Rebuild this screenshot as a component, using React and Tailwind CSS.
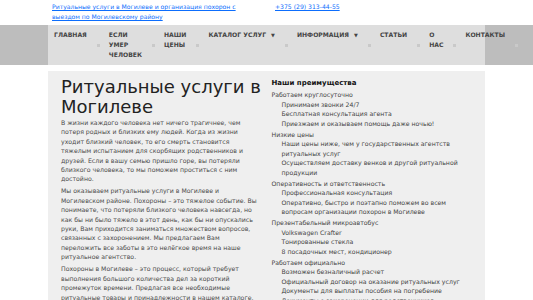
const navItems = [
  { label: "Главная", wrap: false },
  { label: "Если умер человек", wrap: true },
  { label: "Наши цены", wrap: true },
  { label: "Каталог услуг", wrap: false, caret: true },
  { label: "Информация", wrap: false, caret: true },
  { label: "Статьи", wrap: false },
  { label: "О нас", wrap: true },
  { label: "Контакты", wrap: false },
];

const advantages = [
  {
    title: "Работаем круглосуточно",
    items: [
      "Принимаем звонки 24/7",
      "Бесплатная консультация агента",
      "Приезжаем и оказываем помощь даже ночью!",
    ],
  },
  {
    title: "Низкие цены",
    items: [
      "Наши цены ниже, чем у государственных агентств ритуальных услуг",
      "Осуществляем доставку венков и другой ритуальной продукции",
    ],
  },
  {
    title: "Оперативность и ответственность",
    items: [
      "Профессиональная консультация",
      "Оперативно, быстро и поэтапно поможем во всем вопросам организации похорон в Могилеве",
    ],
  },
  {
    title: "Презентабельный микроавтобус",
    items: ["Volkswagen Crafter", "Тонированные стекла", "8 посадочных мест, кондиционер"],
  },
  {
    title: "Работаем официально",
    items: [
      "Возможен безналичный расчет",
      "Официальный договор на оказание ритуальных услуг",
      "Документы для выплаты пособия на погребение",
      "Документы о захоронении для родственников",
    ],
  },
];

const App = () => {
  return (
    <div className="min-h-screen bg-white font-['DejaVu_Sans',sans-serif] overflow-hidden">
      {/* Top links */}
      <div className="mx-auto w-[437px] h-[25px] flex pt-[2px] text-[6.1px] leading-[10px]">
        <div className="w-[218px] pl-[4px]">
          <a href="#" className="text-[#0d6efd] underline">
            Ритуальные услуги в Могилеве и организация похорон с<br />выездом по Могилевскому району
          </a>
        </div>
        <div className="pl-[9px]">
          <a href="#" className="text-[#0d6efd] underline">+375 (29) 313-44-55</a>
        </div>
      </div>

      {/* Nav */}
      <div className="bg-[#bdbdbd]">
        <ul className="mx-auto w-[437px] h-[40px] bg-[#dedede] flex pt-[5px]">
          {navItems.map((item) => (
            <li key={item.label} className="flex items-start pl-[6px] pr-[3px] shrink-0 h-[30px]">
              <span
                className={`text-[6.1px] leading-[10px] font-bold uppercase text-[#444] ${item.wrap ? "w-min" : "whitespace-nowrap"}`}
              >
                {item.label}
                {item.caret && <span className="ml-[5px] text-[5px]">▼</span>}
              </span>
              <span className="ml-[10px] self-center w-[3px] h-[3px] bg-[#c9c9c9]" />
            </li>
          ))}
        </ul>
      </div>

      {/* Content */}
      <div className="mx-auto mt-[6px] w-[437px] bg-[#efefef] px-[13px] pt-[6px] pb-[20px] grid grid-cols-2 gap-[10px]">
        <div>
          <h1 className="text-[18px] leading-[20px] text-[#222] mb-[1px]">Ритуальные услуги в Могилеве</h1>
          <div className="text-[6.2px] leading-[9.4px] text-[#4a4a4a] space-y-[2.6px]">
            <p>
              В жизни каждого человека нет ничего трагичнее, чем потеря родных и близких ему людей. Когда из жизни
              уходит близкий человек, то его смерть становится тяжелым испытанием для скорбящих родственников и
              друзей. Если в вашу семью пришло горе, вы потеряли близкого человека, то мы поможем проститься с ним
              достойно.
            </p>
            <p>
              Мы оказываем ритуальные услуги в Могилеве и Могилевском районе. Похороны – это тяжелое событие. Вы
              понимаете, что потеряли близкого человека навсегда, но как бы ни было тяжело в этот день, как бы ни
              опускались руки, Вам приходится заниматься множеством вопросов, связанных с захоронением. Мы предлагаем
              Вам переложить все заботы в это нелёгкое время на наше ритуальное агентство.
            </p>
            <p>
              Похороны в Могилеве – это процесс, который требует выполнения большого количества дел за короткий
              промежуток времени. Предлагая все необходимые ритуальные товары и принадлежности в нашем каталоге,
              мы берем на себя все хлопоты.
            </p>
          </div>
        </div>

        <div className="pt-[1px] text-[6.2px] leading-[9.5px] text-[#444]">
          <h3 className="font-bold text-[7px] leading-[10px] text-[#111] mb-[2px]">Наши преимущества</h3>
          <div className="space-y-[1.5px]">
            {advantages.map((group) => (
              <div key={group.title}>
                <div>{group.title}</div>
                <ul className="pl-[10px]">
                  {group.items.map((it) => (
                    <li key={it}>{it}</li>
                  ))}
                </ul>
              </div>
            ))}
          </div>
        </div>
      </div>
    </div>
  );
};

export default App;
